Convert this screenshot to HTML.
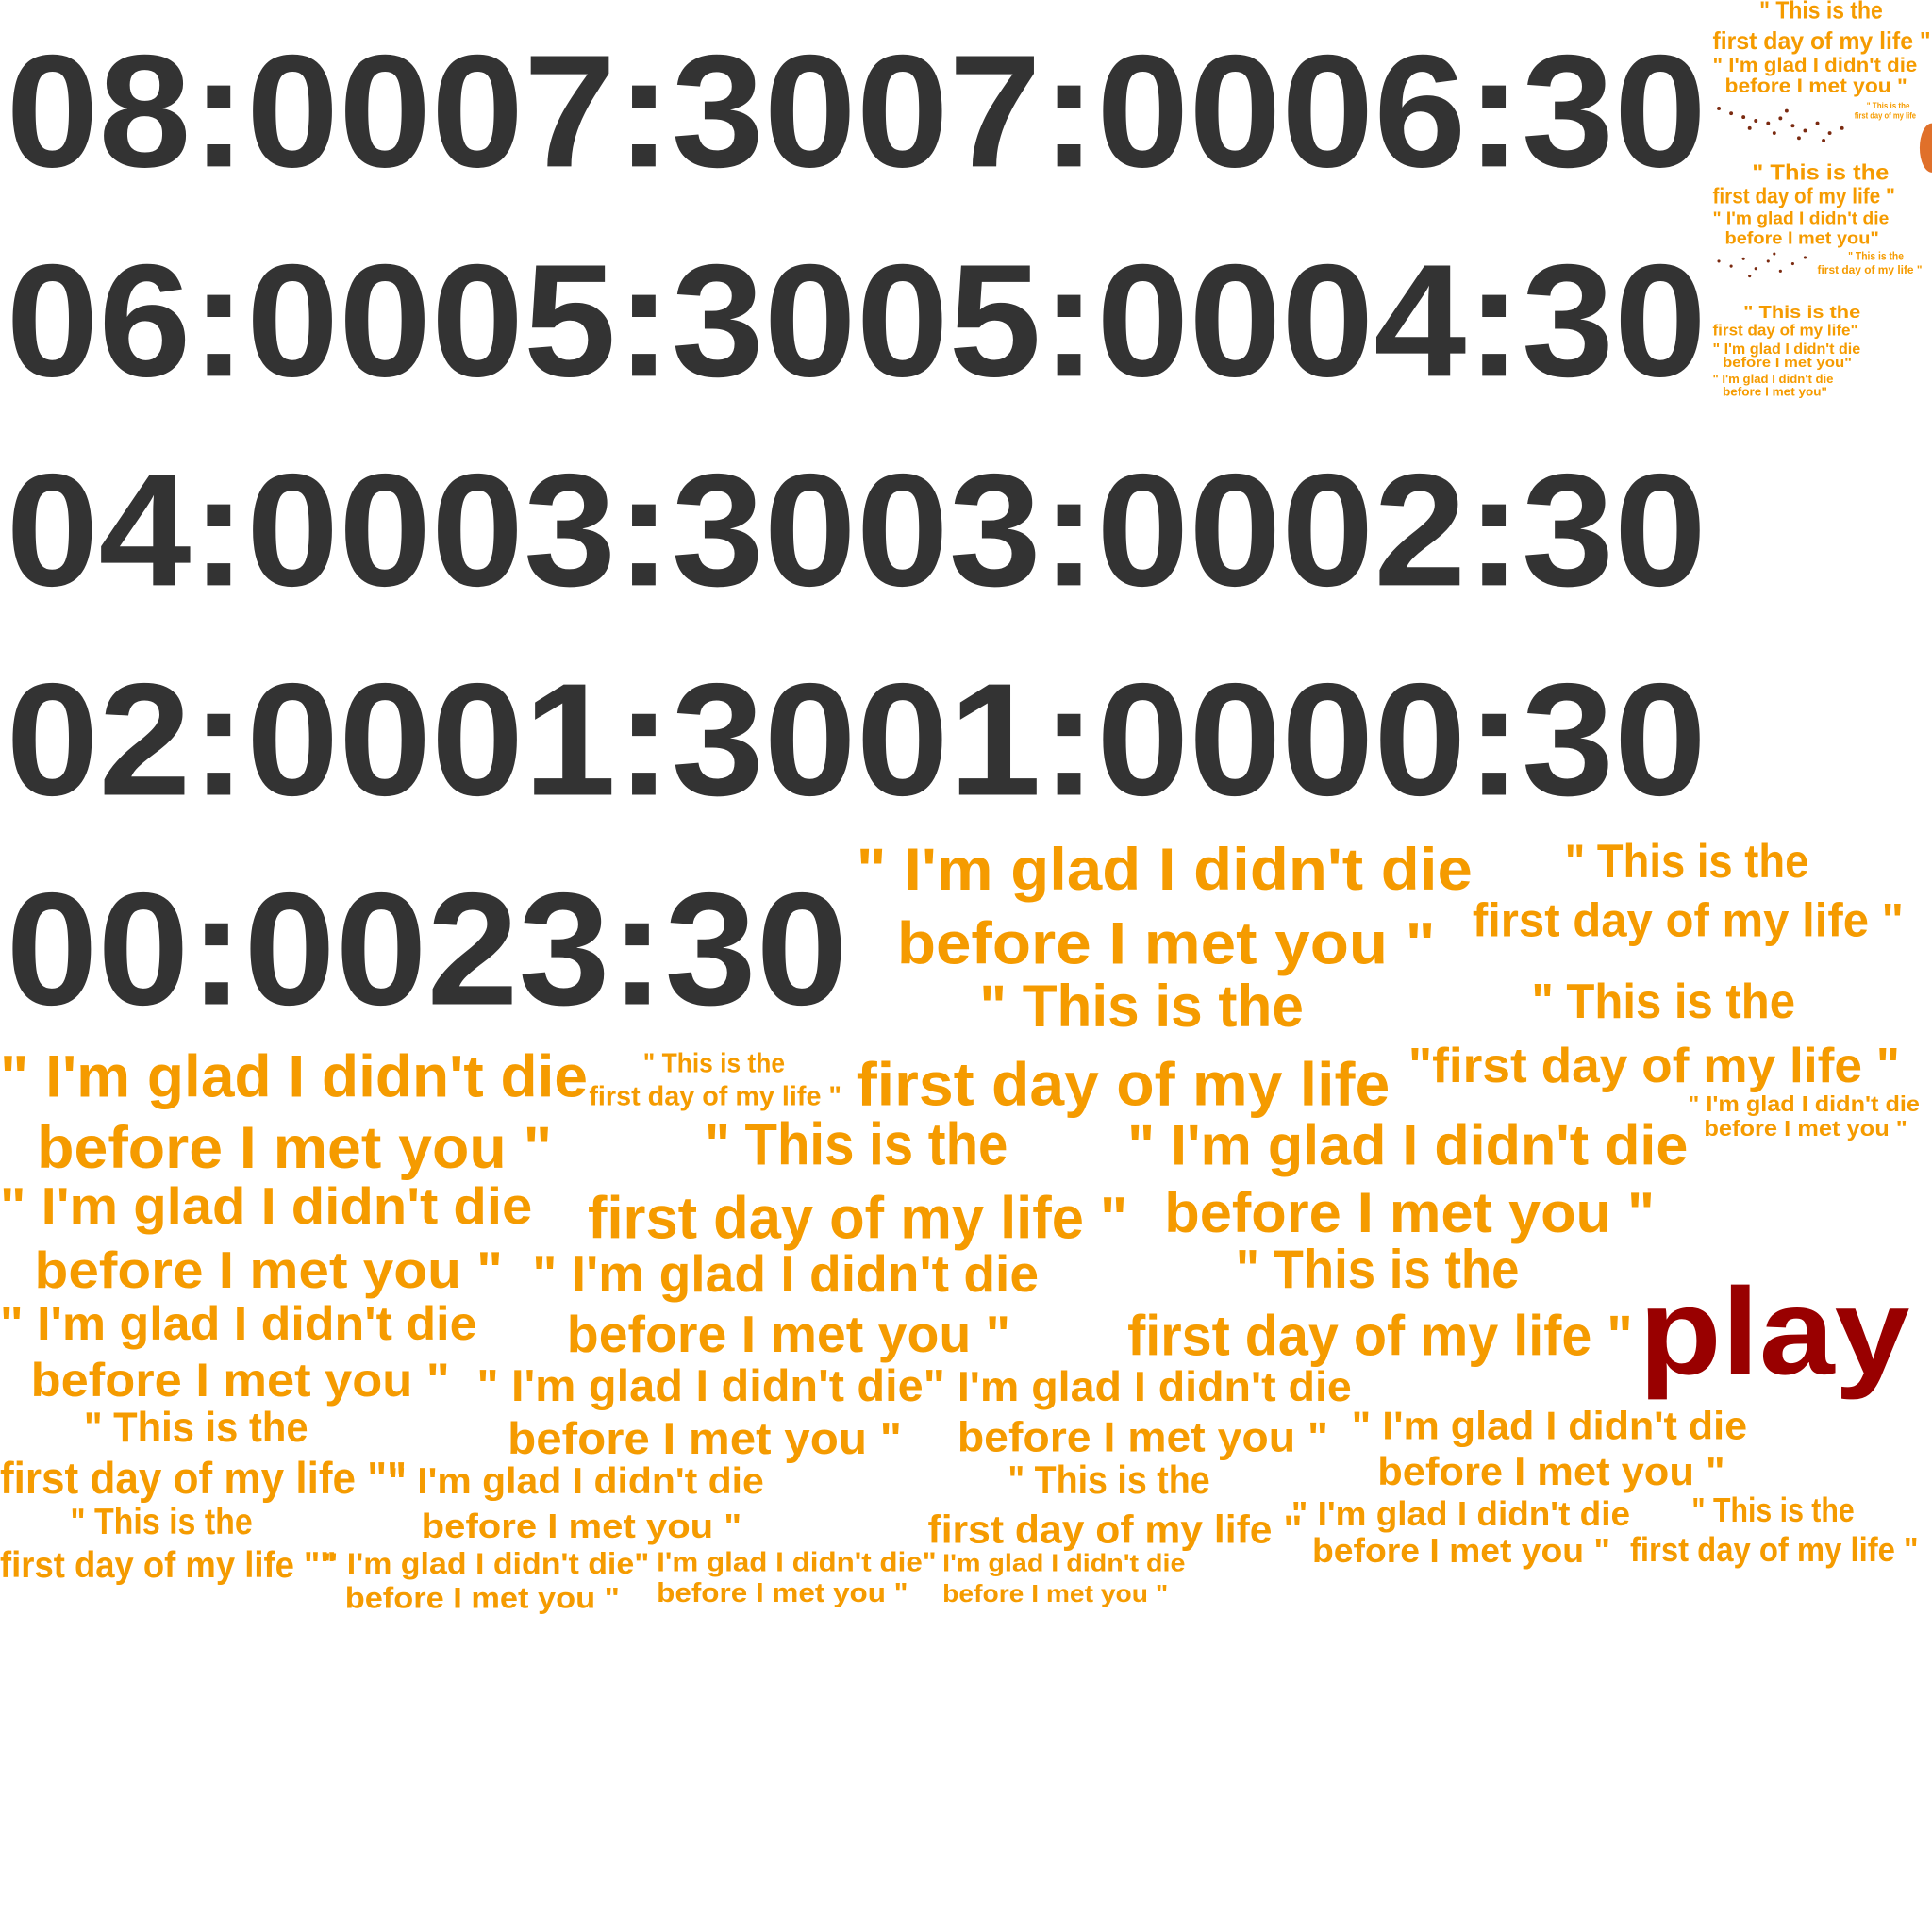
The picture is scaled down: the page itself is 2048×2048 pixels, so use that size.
<!DOCTYPE html>
<html><head><meta charset="utf-8"><style>
html,body{margin:0;padding:0;background:#fff;}
svg{display:block}
text{font-family:"Liberation Sans",sans-serif;font-weight:bold;}
.d{fill:#333;font-size:130px}
.o{fill:#f59b00}
</style></head><body>
<svg width="2048" height="2048" viewBox="0 0 1568 1568" xmlns="http://www.w3.org/2000/svg">
<g class="d">
<text x="5" y="135" textLength="1380" lengthAdjust="spacingAndGlyphs">08:0007:3007:0006:30</text>
<text x="5" y="305" textLength="1380" lengthAdjust="spacingAndGlyphs">06:0005:3005:0004:30</text>
<text x="5" y="475" textLength="1380" lengthAdjust="spacingAndGlyphs">04:0003:3003:0002:30</text>
<text x="5" y="645" textLength="1380" lengthAdjust="spacingAndGlyphs">02:0001:3001:0000:30</text>
<text x="5" y="815" textLength="683" lengthAdjust="spacingAndGlyphs">00:0023:30</text>
</g>
<g class="o">
<text x="695" y="722" font-size="48" textLength="500" lengthAdjust="spacingAndGlyphs">" I'm glad I didn't die</text>
<text x="728" y="782" font-size="48" textLength="437" lengthAdjust="spacingAndGlyphs">before I met you "</text>
<text x="1270" y="712" font-size="38" textLength="198" lengthAdjust="spacingAndGlyphs">" This is the</text>
<text x="1195" y="760" font-size="38" textLength="350" lengthAdjust="spacingAndGlyphs">first day of my life "</text>
<text x="795" y="833" font-size="48" textLength="263" lengthAdjust="spacingAndGlyphs">" This is the</text>
<text x="1243" y="826" font-size="40" textLength="214" lengthAdjust="spacingAndGlyphs">" This is the</text>
<text x="0" y="890" font-size="48" textLength="477" lengthAdjust="spacingAndGlyphs">" I'm glad I didn't die</text>
<text x="522" y="870" font-size="22" textLength="115" lengthAdjust="spacingAndGlyphs">" This is the</text>
<text x="478" y="897" font-size="22" textLength="205" lengthAdjust="spacingAndGlyphs">first day of my life "</text>
<text x="695" y="897" font-size="50" textLength="433" lengthAdjust="spacingAndGlyphs">first day of my life</text>
<text x="1143" y="878" font-size="40" textLength="399" lengthAdjust="spacingAndGlyphs">"first day of my life "</text>
<text x="1370" y="902" font-size="18" textLength="188" lengthAdjust="spacingAndGlyphs">" I'm glad I didn't die</text>
<text x="1383" y="922" font-size="18" textLength="165" lengthAdjust="spacingAndGlyphs">before I met you "</text>
<text x="30" y="948" font-size="48" textLength="418" lengthAdjust="spacingAndGlyphs">before I met you "</text>
<text x="572" y="945" font-size="48" textLength="246" lengthAdjust="spacingAndGlyphs">" This is the</text>
<text x="915" y="945" font-size="46" textLength="455" lengthAdjust="spacingAndGlyphs">" I'm glad I didn't die</text>
<text x="0" y="993" font-size="42" textLength="432" lengthAdjust="spacingAndGlyphs">" I'm glad I didn't die</text>
<text x="477" y="1005" font-size="48" textLength="438" lengthAdjust="spacingAndGlyphs">first day of my life "</text>
<text x="945" y="1000" font-size="46" textLength="398" lengthAdjust="spacingAndGlyphs">before I met you "</text>
<text x="28" y="1045" font-size="42" textLength="380" lengthAdjust="spacingAndGlyphs">before I met you "</text>
<text x="432" y="1048" font-size="42" textLength="411" lengthAdjust="spacingAndGlyphs">" I'm glad I didn't die</text>
<text x="1003" y="1045" font-size="44" textLength="230" lengthAdjust="spacingAndGlyphs">" This is the</text>
<text x="0" y="1087" font-size="38" textLength="387" lengthAdjust="spacingAndGlyphs">" I'm glad I didn't die</text>
<text x="460" y="1097" font-size="42" textLength="360" lengthAdjust="spacingAndGlyphs">before I met you "</text>
<text x="915" y="1100" font-size="46" textLength="410" lengthAdjust="spacingAndGlyphs">first day of my life "</text>
<text x="25" y="1133" font-size="38" textLength="340" lengthAdjust="spacingAndGlyphs">before I met you "</text>
<text x="387" y="1137" font-size="36" textLength="380" lengthAdjust="spacingAndGlyphs">" I'm glad I didn't die"</text>
<text x="777" y="1137" font-size="34" textLength="320" lengthAdjust="spacingAndGlyphs">I'm glad I didn't die</text>
<text x="68" y="1170" font-size="34" textLength="182" lengthAdjust="spacingAndGlyphs">" This is the</text>
<text x="412" y="1180" font-size="36" textLength="320" lengthAdjust="spacingAndGlyphs">before I met you "</text>
<text x="777" y="1178" font-size="34" textLength="301" lengthAdjust="spacingAndGlyphs">before I met you "</text>
<text x="1097" y="1168" font-size="32" textLength="321" lengthAdjust="spacingAndGlyphs">" I'm glad I didn't die</text>
<text x="0" y="1212" font-size="36" textLength="330" lengthAdjust="spacingAndGlyphs">first day of my life ""</text>
<text x="315" y="1212" font-size="30" textLength="305" lengthAdjust="spacingAndGlyphs">" I'm glad I didn't die</text>
<text x="818" y="1212" font-size="32" textLength="164" lengthAdjust="spacingAndGlyphs">" This is the</text>
<text x="1118" y="1205" font-size="32" textLength="282" lengthAdjust="spacingAndGlyphs">before I met you "</text>
<text x="57" y="1245" font-size="30" textLength="148" lengthAdjust="spacingAndGlyphs">" This is the</text>
<text x="342" y="1248" font-size="28" textLength="260" lengthAdjust="spacingAndGlyphs">before I met you "</text>
<text x="753" y="1252" font-size="32" textLength="304" lengthAdjust="spacingAndGlyphs">first day of my life "</text>
<text x="1048" y="1238" font-size="28" textLength="275" lengthAdjust="spacingAndGlyphs">" I'm glad I didn't die</text>
<text x="1373" y="1235" font-size="28" textLength="132" lengthAdjust="spacingAndGlyphs">" This is the</text>
<text x="0" y="1280" font-size="30" textLength="273" lengthAdjust="spacingAndGlyphs">first day of my life ""</text>
<text x="262" y="1277" font-size="24" textLength="265" lengthAdjust="spacingAndGlyphs">" I'm glad I didn't die"</text>
<text x="533" y="1275" font-size="22" textLength="227" lengthAdjust="spacingAndGlyphs">I'm glad I didn't die"</text>
<text x="765" y="1275" font-size="20" textLength="197" lengthAdjust="spacingAndGlyphs">I'm glad I didn't die</text>
<text x="1065" y="1268" font-size="28" textLength="242" lengthAdjust="spacingAndGlyphs">before I met you "</text>
<text x="1323" y="1267" font-size="28" textLength="234" lengthAdjust="spacingAndGlyphs">first day of my life "</text>
<text x="280" y="1305" font-size="24" textLength="223" lengthAdjust="spacingAndGlyphs">before I met you "</text>
<text x="533" y="1300" font-size="22" textLength="204" lengthAdjust="spacingAndGlyphs">before I met you "</text>
<text x="765" y="1300" font-size="20" textLength="183" lengthAdjust="spacingAndGlyphs">before I met you "</text>

<text x="1428" y="15" font-size="20" textLength="100" lengthAdjust="spacingAndGlyphs">" This is the</text>
<text x="1390" y="40" font-size="20" textLength="177" lengthAdjust="spacingAndGlyphs">first day of my life "</text>
<text x="1390" y="58" font-size="16" textLength="166" lengthAdjust="spacingAndGlyphs">" I'm glad I didn't die</text>
<text x="1400" y="75" font-size="16" textLength="148" lengthAdjust="spacingAndGlyphs">before I met you "</text>
<text x="1515" y="88" font-size="7" textLength="35" lengthAdjust="spacingAndGlyphs">" This is the</text>
<text x="1505" y="96" font-size="7" textLength="50" lengthAdjust="spacingAndGlyphs">first day of my life</text>
<text x="1422" y="146" font-size="18" textLength="111" lengthAdjust="spacingAndGlyphs">" This is the</text>
<text x="1390" y="165" font-size="18" textLength="148" lengthAdjust="spacingAndGlyphs">first day of my life "</text>
<text x="1390" y="182" font-size="14" textLength="143" lengthAdjust="spacingAndGlyphs">" I'm glad I didn't die</text>
<text x="1400" y="198" font-size="14" textLength="125" lengthAdjust="spacingAndGlyphs">before I met you"</text>
<text x="1500" y="211" font-size="9" textLength="45" lengthAdjust="spacingAndGlyphs">" This is the</text>
<text x="1475" y="222" font-size="9" textLength="85" lengthAdjust="spacingAndGlyphs">first day of my life "</text>
<text x="1415" y="258" font-size="14" textLength="95" lengthAdjust="spacingAndGlyphs">" This is the</text>
<text x="1390" y="272" font-size="13" textLength="118" lengthAdjust="spacingAndGlyphs">first day of my life"</text>
<text x="1390" y="287" font-size="12" textLength="120" lengthAdjust="spacingAndGlyphs">" I'm glad I didn't die</text>
<text x="1398" y="298" font-size="11" textLength="105" lengthAdjust="spacingAndGlyphs">before I met you"</text>
<text x="1390" y="311" font-size="10" textLength="98" lengthAdjust="spacingAndGlyphs">" I'm glad I didn't die</text>
<text x="1398" y="321" font-size="10" textLength="85" lengthAdjust="spacingAndGlyphs">before I met you"</text>
</g>
<g fill="#7a2a10">
<circle cx="1395" cy="88" r="1.5"/><circle cx="1405" cy="92" r="1.5"/><circle cx="1415" cy="95" r="1.5"/><circle cx="1425" cy="98" r="1.5"/><circle cx="1435" cy="100" r="1.5"/><circle cx="1445" cy="96" r="1.5"/><circle cx="1455" cy="102" r="1.5"/><circle cx="1465" cy="106" r="1.5"/><circle cx="1475" cy="100" r="1.5"/><circle cx="1485" cy="108" r="1.5"/><circle cx="1495" cy="104" r="1.5"/><circle cx="1460" cy="112" r="1.5"/><circle cx="1440" cy="108" r="1.5"/><circle cx="1420" cy="104" r="1.5"/><circle cx="1480" cy="114" r="1.5"/><circle cx="1450" cy="90" r="1.5"/>
<circle cx="1395" cy="212" r="1.2"/><circle cx="1405" cy="216" r="1.2"/><circle cx="1415" cy="210" r="1.2"/><circle cx="1425" cy="218" r="1.2"/><circle cx="1435" cy="212" r="1.2"/><circle cx="1445" cy="220" r="1.2"/><circle cx="1455" cy="214" r="1.2"/><circle cx="1465" cy="209" r="1.2"/><circle cx="1420" cy="224" r="1.2"/><circle cx="1440" cy="206" r="1.2"/>
</g>
<path d="M1568 100 A10 20 0 0 0 1568 140 Z" fill="#e0702a"/>
<text x="1330" y="1115" font-size="100" fill="#990000" textLength="220" lengthAdjust="spacingAndGlyphs">play</text>
</svg>
</body></html>
